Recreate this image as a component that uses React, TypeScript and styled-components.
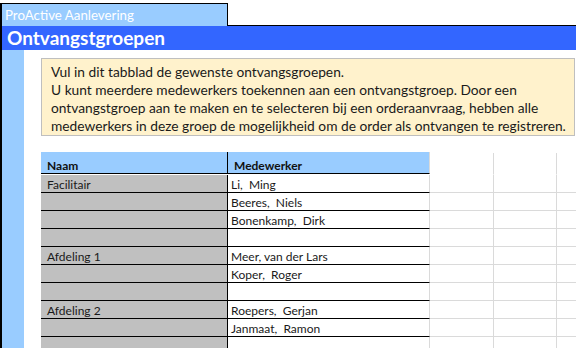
import React, { FC } from "react";
import styled, { createGlobalStyle } from "styled-components";

const colors = {
  black: "#000000",
  tab: "#99ccff",
  header: "#3366ff",
  strip: "#99ccff",
  note: "#fff2cc",
  noteBorder: "#bfbfbf",
  gray: "#c0c0c0",
  grid: "#dadada",
  text: "#1a1a1a",
  white: "#ffffff",
};

const GlobalStyle = createGlobalStyle`
  html, body {
    margin: 0;
    padding: 0;
    background: ${colors.white};
    overflow: hidden;
  }
  body {
    font-family: Lato, "Liberation Sans", sans-serif;
    color: ${colors.text};
  }
`;

const Frame = styled.div`
  margin-top: 3px;
  height: 345px;
  border-left: 2px solid ${colors.black};
  display: flex;
  flex-direction: column;
  overflow: hidden;
`;

const TabRow = styled.div`
  display: flex;
  height: 23px;
`;

const Tab = styled.div`
  width: 222px;
  height: 22px;
  border-top: 1px solid ${colors.black};
  border-right: 1px solid ${colors.black};
  background: ${colors.tab};
  color: ${colors.white};
  font-size: 13.3px;
  line-height: 22px;
  padding-left: 3px;
  box-sizing: content-box;
  white-space: nowrap;
`;

const TabFiller = styled.div`
  flex: 1;
  border-bottom: 1px solid ${colors.black};
`;

const Title = styled.h1`
  margin: 0;
  height: 25px;
  background: ${colors.header};
  color: ${colors.white};
  font-size: 19px;
  font-weight: 700;
  line-height: 24px;
  padding-left: 5px;
`;

const Body = styled.div`
  flex: 1;
  display: flex;
  min-width: 0;
`;

const Strip = styled.div`
  width: 22px;
  flex-shrink: 0;
  background: ${colors.strip};
`;

const Content = styled.div`
  flex: 1;
  min-width: 0;
  overflow: hidden;
  padding: 8px 0 0 17px;
  display: flex;
  flex-direction: column;
  gap: 16px;
`;

const Note = styled.div`
  width: 534px;
  flex-shrink: 0;
  border: 1px solid ${colors.noteBorder};
  background: ${colors.note};
  padding: 4px 0 0 9px;
  box-sizing: border-box;
  height: 78px;
  font-size: 13.75px;
  line-height: 18px;
  white-space: nowrap;
`;

const Sheet = styled.div`
  display: grid;
  grid-template-columns: 187px 202px 64px 63px 64px;
`;

const Cell = styled.div<{ $kind: "head" | "name" | "member"; $tall?: boolean }>`
  height: ${(p) => (p.$tall ? "22px" : "18px")};
  box-sizing: border-box;
  padding-left: ${(p) => (p.$kind === "member" ? "3px" : "6px")};
  font-size: 12px;
  line-height: 17px;
  padding-top: ${(p) => (p.$tall ? "5px" : "1px")};
  white-space: pre;
  overflow: hidden;
  background: ${(p) =>
    p.$kind === "head" ? colors.tab : p.$kind === "name" ? colors.gray : colors.white};
  border-bottom: 1px solid ${colors.black};
  border-right: 1px solid ${(p) => (p.$kind === "member" ? colors.grid : colors.black)};
`;

const HeadCell = styled(Cell)<{ $last?: boolean }>`
  font-weight: 700;
  color: #111;
  ${(p) => (p.$last ? `border-right-color: ${colors.grid};` : "")}
`;

const GridCell = styled.div<{ $tall?: boolean }>`
  height: ${(p) => (p.$tall ? "22px" : "18px")};
  box-sizing: border-box;
  border-right: 1px solid ${colors.grid};
  border-bottom: 1px solid ${colors.grid};
  ${(p) => (p.$tall ? "border-bottom-color: transparent; margin-top: 1px;" : "")}
`;

const rows: [string, string][] = [
  ["Facilitair", "Li,  Ming"],
  ["", "Beeres,  Niels"],
  ["", "Bonenkamp,  Dirk"],
  ["", ""],
  ["Afdeling 1", "Meer, van der Lars"],
  ["", "Koper,  Roger"],
  ["", ""],
  ["Afdeling 2", "Roepers,  Gerjan"],
  ["", "Janmaat,  Ramon"],
  ["", ""],
];

const Extra: FC<{ tall?: boolean }> = ({ tall }) => (
  <>
    <GridCell $tall={tall} />
    <GridCell $tall={tall} />
    <GridCell $tall={tall} />
  </>
);

const App: FC = () => (
  <>
    <GlobalStyle />
    <Frame>
      <TabRow>
        <Tab>ProActive Aanlevering</Tab>
        <TabFiller />
      </TabRow>
      <Title>Ontvangstgroepen</Title>
      <Body>
        <Strip />
        <Content>
          <Note>
            Vul in dit tabblad de gewenste ontvangsgroepen.
            <br />
            U kunt meerdere medewerkers toekennen aan een ontvangstgroep. Door een
            <br />
            ontvangstgroep aan te maken en te selecteren bij een orderaanvraag, hebben alle
            <br />
            medewerkers in deze groep de mogelijkheid om de order als ontvangen te registreren.
          </Note>
          <Sheet>
            <HeadCell $kind="head" $tall>
              Naam
            </HeadCell>
            <HeadCell $kind="head" $tall $last>
              Medewerker
            </HeadCell>
            <Extra tall />
            {rows.map(([name, member], i) => (
              <React.Fragment key={i}>
                <Cell $kind="name">{name}</Cell>
                <Cell $kind="member">{member}</Cell>
                <Extra />
              </React.Fragment>
            ))}
          </Sheet>
        </Content>
      </Body>
    </Frame>
  </>
);

export default App;
